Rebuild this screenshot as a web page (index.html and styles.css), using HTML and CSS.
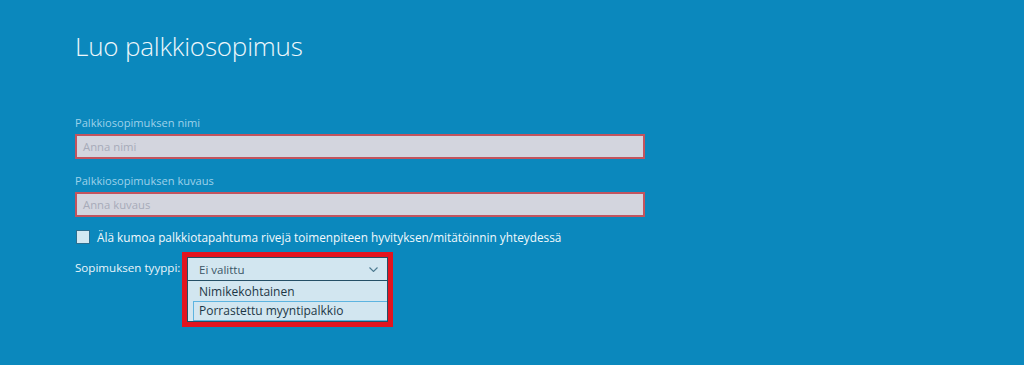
FILE: index.html
```html
<!DOCTYPE html>
<html lang="fi">
<head>
<meta charset="utf-8">
<title>Luo palkkiosopimus</title>
<link rel="stylesheet" href="styles.css">
</head>
<body>
<main class="page">
  <h1 class="title">Luo palkkiosopimus</h1>
  <div class="form">
    <div class="field">
      <label class="label">Palkkiosopimuksen nimi</label>
      <div class="input"><span class="placeholder">Anna nimi</span></div>
    </div>
    <div class="field">
      <label class="label">Palkkiosopimuksen kuvaus</label>
      <div class="input"><span class="placeholder">Anna kuvaus</span></div>
    </div>
    <div class="check-row">
      <span class="checkbox"></span>
      <span class="check-text">Älä kumoa palkkiotapahtuma rivejä toimenpiteen hyvityksen/mitätöinnin yhteydessä</span>
    </div>
    <div class="type-row">
      <span class="type-label">Sopimuksen tyyppi:</span>
      <div class="highlight">
        <div class="select">
          <div class="select-head">
            <span class="select-value">Ei valittu</span>
            <svg class="chevron" width="9" height="5" viewBox="0 0 9 5"><path d="M0.5 0.5 L4.5 4.5 L8.5 0.5" fill="none" stroke="#4d7a90" stroke-width="1.1"/></svg>
          </div>
          <ul class="options">
            <li class="option">Nimikekohtainen</li>
            <li class="option option-hover">Porrastettu myyntipalkkio</li>
          </ul>
        </div>
      </div>
    </div>
  </div>
</main>
</body>
</html>
```
FILE: styles.css
```css
html, body {
  margin: 0;
  padding: 0;
  height: 100%;
}
body {
  background: #0b88bd;
  font-family: "Open Sans", "Noto Sans", "Liberation Sans", sans-serif;
  overflow: hidden;
}
.page {
  padding: 30px 0 0 75px;
}
.title {
  margin: 0;
  font-size: 26px;
  line-height: 32px;
  font-weight: 300;
  color: #eef7fb;
  letter-spacing: -0.2px;
}
.form {
  margin-top: 53px;
  display: flex;
  flex-direction: column;
}
.field {
  display: flex;
  flex-direction: column;
  margin-bottom: 14px;
}
.label {
  font-size: 11.1px;
  line-height: 16px;
  color: #9dd2ea;
  margin-bottom: 3px;
}
.input {
  width: 560px;
  height: 21px;
  border: 2px solid #c2545e;
  background: #d3d5de;
  display: flex;
  align-items: center;
  padding-left: 6px;
  box-sizing: content-box;
}
.placeholder {
  font-size: 11.3px;
  color: #a7abb9;
}
.check-row {
  display: flex;
  align-items: center;
  gap: 7px;
  margin-top: -1px;
  padding-left: 1px;
}
.checkbox {
  width: 12px;
  height: 12px;
  border: 1px solid #2c6e8f;
  background: #d3e8f2;
}
.check-text {
  font-size: 11.8px;
  line-height: 14px;
  color: #f2f9fc;
}
.type-row {
  margin-top: 8px;
  display: flex;
  align-items: flex-start;
  gap: 5px;
}
.type-label {
  width: 102px;
  white-space: nowrap;
  font-size: 11.6px;
  line-height: 16px;
  color: #eaf5fa;
  margin-top: 8px;
}
.highlight {
  border: 5px solid #e3141f;
  display: flex;
}
.select {
  width: 199px;
  border: 1px solid #254f66;
  background: #d2e6f0;
}
.select-head {
  height: 22px;
  border-bottom: 1px solid #254f66;
  display: flex;
  align-items: center;
  justify-content: space-between;
  padding: 0 9px 0 11px;
}
.select-value {
  font-size: 11.5px;
  color: #3b5566;
}
.options {
  list-style: none;
  margin: 0;
  padding: 0;
}
.option {
  font-size: 12px;
  line-height: 18px;
  color: #1d3746;
  padding: 2px 0 0 11px;
}
.option-hover {
  margin-left: 5px;
  padding: 0 0 0 5px;
  height: 18px;
  border: 1px solid #5db4e0;
  border-right: none;
}
```
